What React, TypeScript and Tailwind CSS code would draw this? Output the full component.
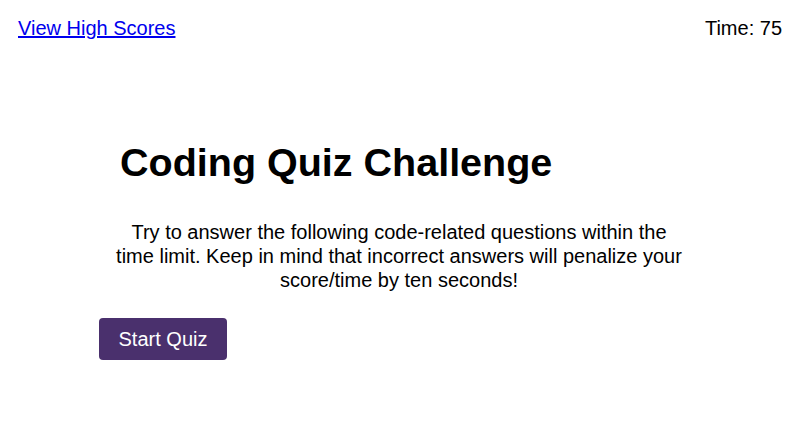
import React from "react";

const App: React.FC = () => {
	return (
		<div className="w-full min-h-[445px] bg-white text-black font-['Liberation_Sans',Arial,sans-serif]">
			<header className="flex justify-between items-center px-[18px] pt-[16px]">
				<a href="#" className="text-[20px] leading-[24px] text-[#0000ee] underline">
					View High Scores
				</a>
				<div className="text-[20px] leading-[24px]">Time: 75</div>
			</header>
			<main className="w-[602px] ml-[99px] mt-[100px] flex flex-col">
				<h1 className="ml-[21px] text-[39.5px] leading-[44px] font-bold">Coding Quiz Challenge</h1>
				<p className="mt-[36px] w-[570px] ml-[15px] text-center text-[20px] leading-[24px]">
					Try to answer the following code-related questions within the time limit. Keep in mind that incorrect answers will penalize your score/time by ten seconds!
				</p>
				<div className="mt-[26px]">
					<button className="w-[128px] h-[42px] rounded-[4px] bg-[#4a306d] text-white text-[20px]">
						Start Quiz
					</button>
				</div>
			</main>
		</div>
	);
};

export default App;
